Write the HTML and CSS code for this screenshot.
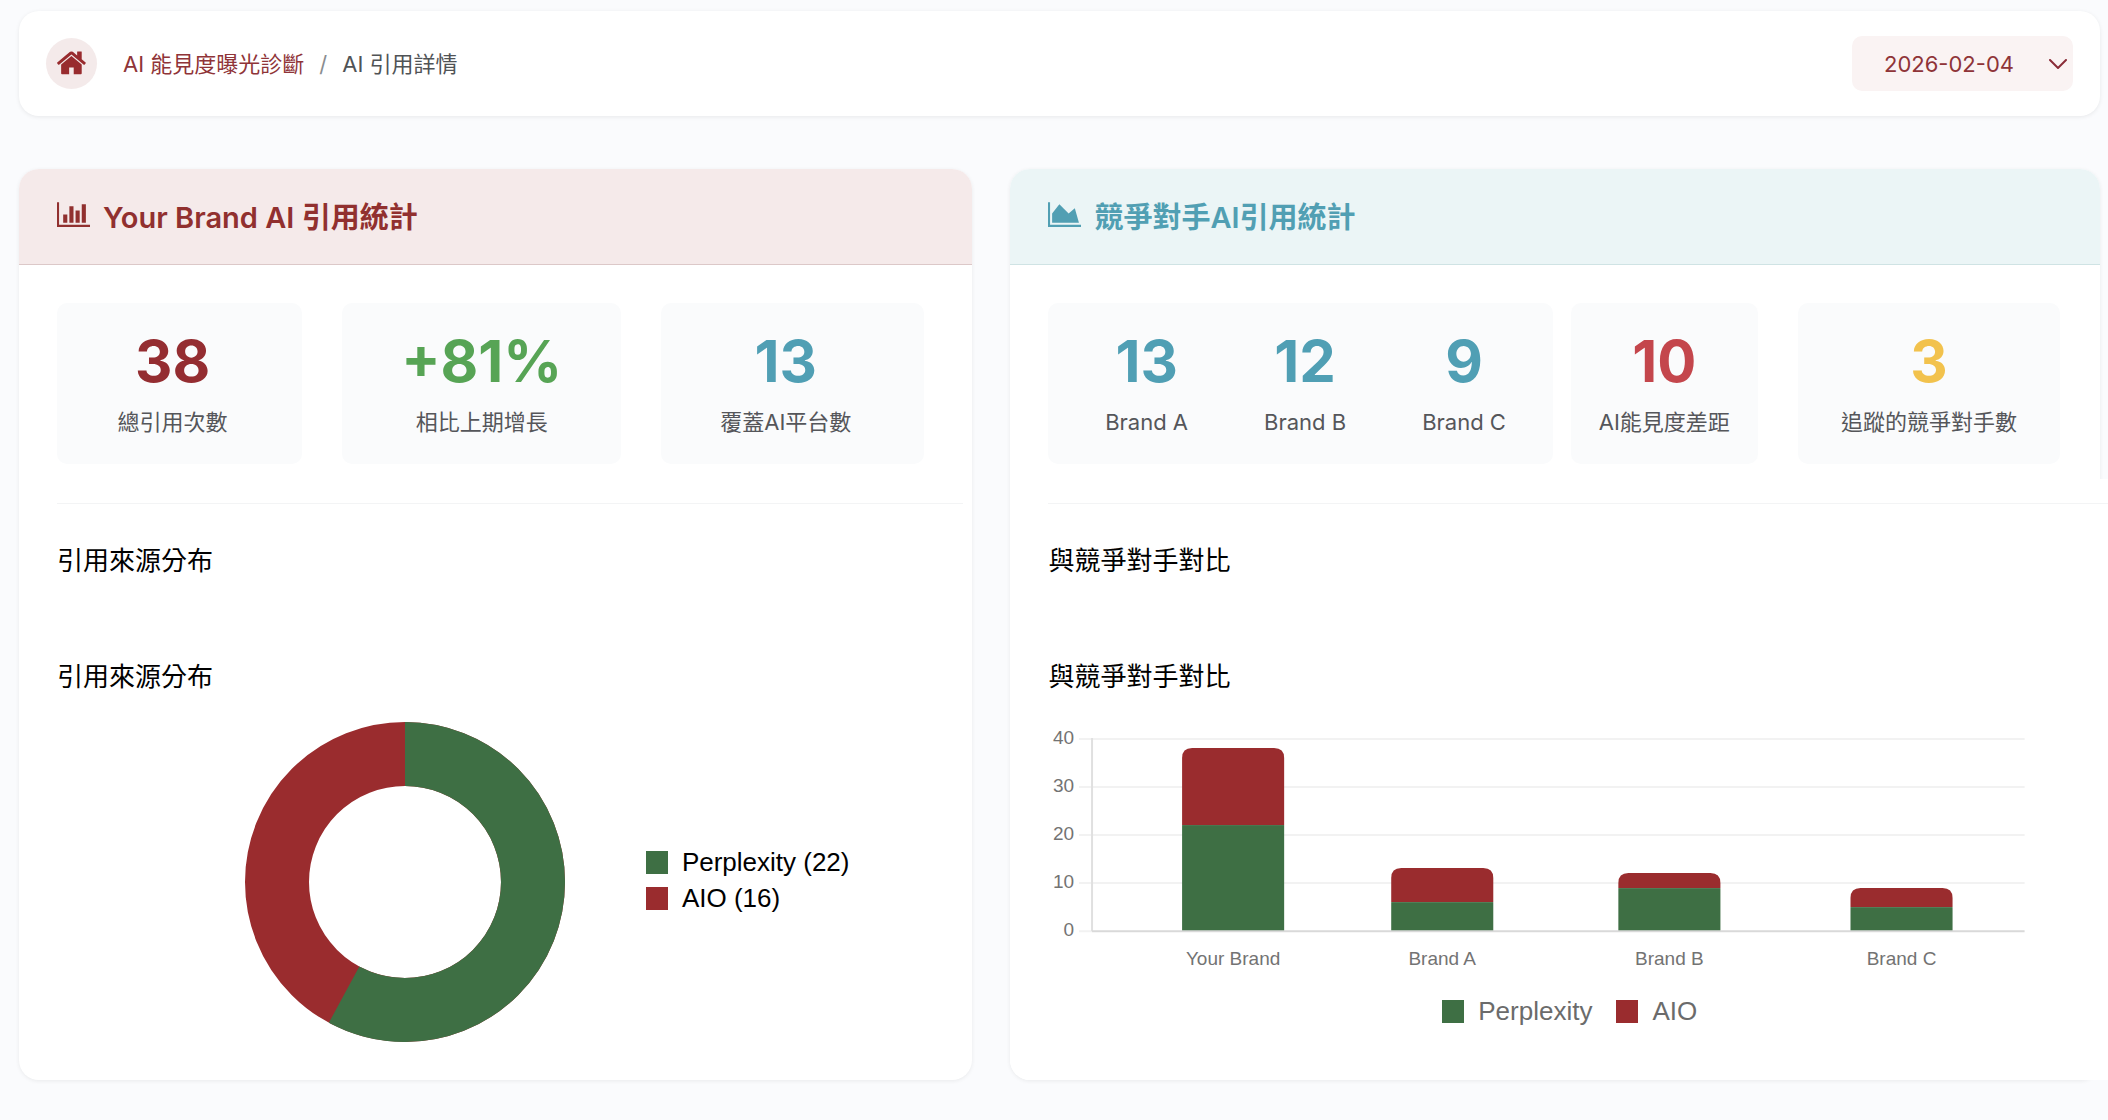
FILE: index.html
```html
<!DOCTYPE html>
<html lang="zh-Hant">
<head>
  <meta charset="UTF-8" />
  <meta name="viewport" content="width=device-width, initial-scale=1.0"/>
  <title>AI 引用詳情</title>
  <link rel="stylesheet" href="styles.css">
</head>
<body>

  <header class="topbar">
    <nav class="breadcrumb" aria-label="breadcrumb">
      <a class="home-btn" href="#" aria-label="首頁">
        <svg viewBox="32 64 1792 1792" width="32" height="32"><path d="M1472 992v480q0 26-19 45t-45 19h-384v-384h-256v384h-384q-26 0-45-19t-19-45v-480q0-1 .5-3t.5-3l575-474 575 474q1 2 1 6zm223-69l-62 74q-8 9-21 11h-3q-13 0-21-7l-692-577-692 577q-12 8-24 7-13-2-21-11l-62-74q-8-10-7-23.5t11-21.5l719-599q32-26 76-26t76 26l244 204v-195q0-14 9-23t23-9h192q14 0 23 9t9 23v408l219 182q10 8 11 21.5t-7 23.5z"/></svg>
      </a>
      <a class="crumb-link" href="#">AI 能見度曝光診斷</a>
      <span class="crumb-sep">/</span>
      <span class="crumb-current">AI 引用詳情</span>
    </nav>

    <div class="date-picker">
      <select class="date-select" aria-label="日期">
        <option>2026-02-04</option>
      </select>
      <svg class="date-arrow" viewBox="0 0 18 10" width="18" height="10"><path d="M1 1l8 8 8-8"/></svg>
    </div>
  </header>

  <main class="panels">

    <section class="panel brand">
      <h2 class="panel-title">
        <svg viewBox="0 128 2048 1536" width="33" height="25"><path d="M640 896v512h-256v-512h256zM1024 384v1024h-256v-1024h256zM2048 1536v128h-2048v-1536h128v1408h1920zM1408 640v768h-256v-768h256zM1792 256v1152h-256v-1152h256z"/></svg>
        <span>Your Brand AI <b>引用統計</b></span>
      </h2>

      <div class="stats brand-stats">
        <div class="stat-card narrow">
          <div class="stat">
            <span class="stat-num maroon">38</span>
            <span class="stat-label">總引用次數</span>
          </div>
        </div>
        <div class="stat-card">
          <div class="stat">
            <span class="stat-num green">+81%</span>
            <span class="stat-label">相比上期增長</span>
          </div>
        </div>
        <div class="stat-card narrow">
          <div class="stat">
            <span class="stat-num teal">13</span>
            <span class="stat-label">覆蓋AI平台數</span>
          </div>
        </div>
      </div>

      <div class="chart-section">
        <h3>引用來源分布</h3>
        <h3>引用來源分布</h3>
        <div class="donut-wrap">
          <svg class="donut" viewBox="0 0 320 320" width="320" height="320" role="img" aria-label="Perplexity 22, AIO 16">
            <circle class="slice-aio" cx="160" cy="160" r="128"/>
            <circle class="slice-perplexity" cx="160" cy="160" r="128" pathLength="38" stroke-dasharray="22 16" transform="rotate(-90 160 160)"/>
          </svg>
          <ul class="legend donut-legend">
            <li><i class="swatch bg-perplexity"></i>Perplexity (22)</li>
            <li><i class="swatch bg-aio"></i>AIO (16)</li>
          </ul>
        </div>
      </div>
    </section>

    <section class="panel rivals">
      <h2 class="panel-title">
        <svg viewBox="0 128 2048 1536" width="33" height="25"><path d="M2048 1536v128h-2048v-1536h128v1408h1920zM1664 512l256 896h-1664v-576l448-576 576 576z"/></svg>
        <span><b>競爭對手</b>AI<b>引用統計</b></span>
      </h2>

      <div class="stats rival-stats">
        <div class="stat-card stat-group">
          <div class="stat">
            <span class="stat-num teal">13</span>
            <span class="stat-label">Brand A</span>
          </div>
          <div class="stat">
            <span class="stat-num teal">12</span>
            <span class="stat-label">Brand B</span>
          </div>
          <div class="stat">
            <span class="stat-num teal">9</span>
            <span class="stat-label">Brand C</span>
          </div>
        </div>
        <div class="stat-card">
          <div class="stat">
            <span class="stat-num red">10</span>
            <span class="stat-label">AI能見度差距</span>
          </div>
        </div>
        <div class="stat-card last">
          <div class="stat">
            <span class="stat-num yellow">3</span>
            <span class="stat-label">追蹤的競爭對手數</span>
          </div>
        </div>
      </div>

      <div class="chart-section">
        <h3>與競爭對手對比</h3>
        <h3>與競爭對手對比</h3>
        <svg class="bar-chart" viewBox="0 0 976 256" role="img" aria-label="與競爭對手對比">
          <!-- grid: 48px per 10 -->
          <path class="grid-line" d="M31 17h945M31 65h945M31 113h945M31 161h945M31 209h13"/>
          <path class="axis-y" d="M44 16v193"/>
          <g class="tick" text-anchor="end">
            <text x="26" y="22">40</text>
            <text x="26" y="70">30</text>
            <text x="26" y="118">20</text>
            <text x="26" y="166">10</text>
            <text x="26" y="214">0</text>
          </g>
          <!-- Your Brand 22 + 16 -->
          <path class="fill-aio" d="M134 103V36q0-10 10-10h82q10 0 10 10v67z"/>
          <rect class="fill-perplexity" x="134" y="103" width="102" height="106"/>
          <!-- Brand A 6 + 7 -->
          <path class="fill-aio" d="M343 180v-24q0-10 10-10h82q10 0 10 10v24z"/>
          <rect class="fill-perplexity" x="343" y="180" width="102" height="29"/>
          <!-- Brand B 9 + 3 -->
          <path class="fill-aio" d="M570 166v-5q0-10 10-10h82q10 0 10 10v5z"/>
          <rect class="fill-perplexity" x="570" y="166" width="102" height="43"/>
          <!-- Brand C 5 + 4 -->
          <path class="fill-aio" d="M802 185v-9q0-10 10-10h82q10 0 10 10v9z"/>
          <rect class="fill-perplexity" x="802" y="185" width="102" height="24"/>
          <path class="axis-x" d="M44 209h932"/>
          <g class="tick" text-anchor="middle">
            <text x="185" y="243">Your Brand</text>
            <text x="394" y="243">Brand A</text>
            <text x="621" y="243">Brand B</text>
            <text x="853" y="243">Brand C</text>
          </g>
        </svg>
        <ul class="legend bar-legend">
          <li><i class="swatch bg-perplexity"></i>Perplexity</li>
          <li><i class="swatch bg-aio"></i>AIO</li>
        </ul>
      </div>
    </section>

  </main>

</body>
</html>
```

FILE: styles.css
```css
* {
  box-sizing: border-box;
  margin: 0;
  padding: 0;
}

body {
  font-family: Inter, "Noto Sans CJK TC", sans-serif;
  background: #fafbfd;
  color: #000;
  padding: 11px 8px 40px 19px;
  overflow-x: hidden;
}

.topbar {
  display: flex;
  align-items: center;
  justify-content: space-between;
  background: #fff;
  border-radius: 20px;
  padding: 25px 27px;
  box-shadow: 0 1px 4px rgba(0, 0, 0, 0.08);
}

.breadcrumb {
  display: flex;
  align-items: center;
  font-size: 22px;
  line-height: 32px;
}

.home-btn {
  display: flex;
  align-items: center;
  justify-content: center;
  width: 51px;
  height: 51px;
  border-radius: 50%;
  background: #f4eaea;
  margin-right: 26px;
}

.home-btn svg {
  fill: #982b2e;
}

.crumb-link {
  color: #8f3438;
  text-decoration: none;
}

.crumb-sep {
  color: #8a8d90;
  margin: 0 15px;
}

.crumb-current {
  color: #505356;
}

.date-picker {
  position: relative;
}

.date-select {
  appearance: none;
  border: none;
  border-radius: 10px;
  background: #faf3f3;
  color: #8f3438;
  font-family: inherit;
  font-size: 22px;
  width: 221px;
  height: 55px;
  padding: 0 32px;
}

.date-arrow {
  position: absolute;
  right: 6px;
  top: 23px;
  pointer-events: none;
  fill: none;
  stroke: #8a2c38;
  stroke-width: 2;
  stroke-linecap: round;
}

.panels {
  display: grid;
  grid-template-columns: 7fr 8fr;
  gap: 38px;
  margin-top: 53px;
}

.panel {
  display: flex;
  flex-direction: column;
  background: #fff;
  border-radius: 20px;
  box-shadow: 0 1px 4px rgba(0, 0, 0, 0.07);
}

.panel-title {
  display: flex;
  align-items: center;
  gap: 13px;
  height: 96px;
  padding: 0 38px 4px;
  border-radius: 20px 20px 0 0;
  font-size: 29px;
  font-weight: 600;
}

.panel-title b {
  font-weight: 700;
}

.panel-title svg {
  fill: currentColor;
}

.brand .panel-title {
  background: #f5eaea;
  border-bottom: 1px solid #dcc8c8;
  color: #91302f;
}

.rivals .panel-title {
  background: #ebf5f6;
  border-bottom: 1px solid #cfe3e4;
  color: #519fb3;
}

.stats {
  display: grid;
  padding: 38px 0 15px 38px;
}

.brand-stats {
  grid-template-columns: 246fr 280fr 264fr;
  gap: 40px;
  padding-right: 48px;
}

.rival-stats {
  grid-template-columns: 504fr 187fr 284fr;
  column-gap: 18px;
  padding-right: 40px;
}

.rival-stats .last {
  margin-left: 22px;
}

.stat-card {
  display: flex;
  justify-content: center;
  height: 161px;
  padding-top: 22px;
  border-radius: 10px;
  background: #fafbfc;
}

.stat-card.narrow {
  padding-right: 14px;
}

.stat-group {
  gap: 76px;
  padding-left: 10px;
}

.stat {
  display: flex;
  flex-direction: column;
  align-items: center;
}

.stat-num {
  font-size: 58px;
  font-weight: 700;
  line-height: 72px;
}

.stat-label {
  font-size: 22px;
  line-height: 30px;
  margin-top: 10px;
  color: #55565a;
  white-space: nowrap;
}

.maroon { color: #942d31; }
.green { color: #57a455; }
.teal { color: #509fb4; }
.red { color: #c4464c; }
.yellow { color: #f2c24d; }

.chart-section {
  flex: 1;
  padding: 24px 9px 38px 38px;
}

/* comparison area runs past the card edge */
.rivals .chart-section {
  background: #fff;
  margin-right: -48px;
  border-radius: 0 0 20px 20px;
}

.chart-section h3 {
  font-size: 26px;
  font-weight: 400;
  line-height: 38px;
  margin-bottom: 26px;
}

.chart-section h3:first-child {
  border-top: 1px solid #f3f4f5;
  padding-top: 38px;
  margin-bottom: 78px;
}

.donut-wrap {
  display: flex;
  align-items: center;
  justify-content: center;
  gap: 81px;
  padding-left: 74px;
}

.donut circle {
  fill: none;
  stroke-width: 64;
}

.donut .slice-aio {
  stroke: #9a2c2e;
}

.donut .slice-perplexity {
  stroke: #3e6f44;
}

.legend {
  list-style: none;
  display: flex;
  font-family: "Liberation Sans", sans-serif;
  font-size: 26px;
  line-height: 36px;
}

.legend li {
  display: flex;
  align-items: center;
  gap: 14px;
}

.swatch {
  width: 22px;
  height: 23px;
}

.bg-perplexity { background: #3e6f44; }
.bg-aio { background: #9a2c2e; }

.donut-legend {
  flex-direction: column;
  padding-bottom: 4px;
}

.bar-chart {
  display: block;
  width: calc(100% - 114px);
}

.fill-perplexity { fill: #3e6f44; }
.fill-aio { fill: #9a2c2e; }

.grid-line {
  stroke: #f2f2f2;
  stroke-width: 2;
}

.axis-y {
  stroke: #e0e0e0;
  stroke-width: 2;
}

.axis-x {
  stroke: #d9d9d9;
  stroke-width: 2;
}

.tick {
  font-family: "Liberation Sans", sans-serif;
  font-size: 19px;
  fill: #737373;
}

.bar-legend {
  justify-content: center;
  gap: 24px;
  margin-top: 15px;
  padding-right: 48px;
  color: #6b6b6b;
}
```
